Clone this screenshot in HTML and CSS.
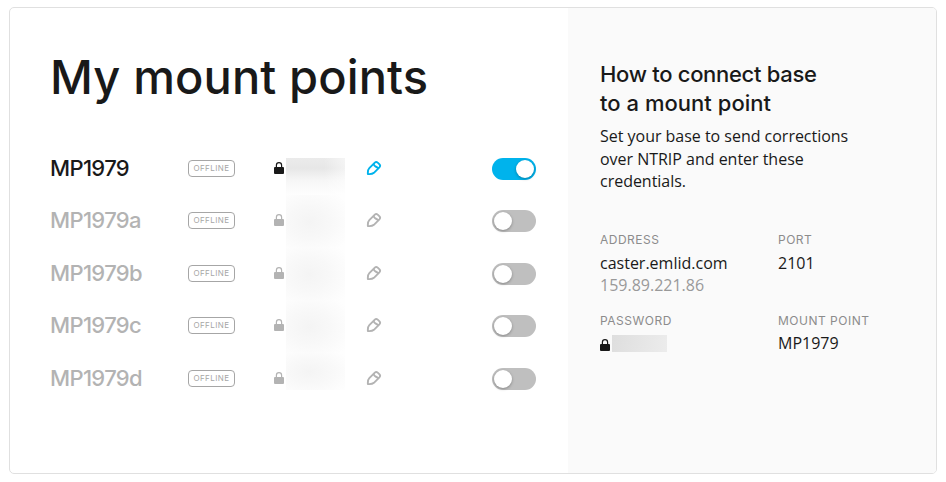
FILE: index.html
```
<!DOCTYPE html>
<html lang="en">
<head>
<meta charset="utf-8">
<title>My mount points</title>
<link rel="stylesheet" href="styles.css">
</head>
<body>
<svg width="0" height="0" class="defs" aria-hidden="true">
  <symbol id="lock" viewBox="0 0 10 12"><path d="M2.4 5.5V3.3a2.6 2.6 0 0 1 5.2 0v2.2" fill="none" stroke="currentColor" stroke-width="1.2"/><rect y="5" width="10" height="7" rx="1" fill="currentColor"/></symbol>
  <symbol id="pencil" viewBox="0 0 16 16"><path d="M1.9 14.1C1.7 11.6 2 9.4 3.3 8.1L8.8 2.6Q10.2 1.3 11.7 2.6L13.5 4.4Q14.8 5.9 13.4 7.3L7.9 12.8C6.6 14 4.3 14.3 1.9 14.1ZM7.7 3.9Q8.1 6 9.5 6.5T12.1 8.3" fill="none" stroke="currentColor" stroke-width="1.9" stroke-linejoin="round"/></symbol>
</svg>
<main class="card">
  <section class="points">
    <h1>My mount points</h1>
    <div class="list">
      <div class="row active"><span class="name">MP1979</span><span class="badge">OFFLINE</span><svg class="lock"><use href="#lock"/></svg><span class="secret"></span><svg class="pencil"><use href="#pencil"/></svg><span class="toggle"></span></div>
      <div class="row"><span class="name">MP1979a</span><span class="badge">OFFLINE</span><svg class="lock"><use href="#lock"/></svg><span class="secret"></span><svg class="pencil"><use href="#pencil"/></svg><span class="toggle"></span></div>
      <div class="row"><span class="name">MP1979b</span><span class="badge">OFFLINE</span><svg class="lock"><use href="#lock"/></svg><span class="secret"></span><svg class="pencil"><use href="#pencil"/></svg><span class="toggle"></span></div>
      <div class="row"><span class="name">MP1979c</span><span class="badge">OFFLINE</span><svg class="lock"><use href="#lock"/></svg><span class="secret"></span><svg class="pencil"><use href="#pencil"/></svg><span class="toggle"></span></div>
      <div class="row"><span class="name">MP1979d</span><span class="badge">OFFLINE</span><svg class="lock"><use href="#lock"/></svg><span class="secret"></span><svg class="pencil"><use href="#pencil"/></svg><span class="toggle"></span></div>
    </div>
  </section>
  <aside class="help">
    <h2>How to connect base<br><span class="second">to a mount point</span></h2>
    <p class="intro">Set your base to send corrections<br>over NTRIP and enter these<br>credentials.</p>
    <dl class="credentials">
      <div><dt>ADDRESS</dt><dd>caster.emlid.com<span class="ip">159.89.221.86</span></dd></div>
      <div><dt>PORT</dt><dd>2101</dd></div>
      <div class="lower"><dt>PASSWORD</dt><dd class="password"><svg class="lock"><use href="#lock"/></svg><span class="mask"></span></dd></div>
      <div class="lower"><dt>MOUNT POINT</dt><dd>MP1979</dd></div>
    </dl>
  </aside>
</main>
</body>
</html>
```

FILE: styles.css
```
* { box-sizing: border-box; }
body { margin: 0; background: #fff; color: #191919; font-family: "Open Sans", sans-serif; }
.defs { position: absolute; }
.card { display: grid; grid-template-columns: 558px 1fr; width: 928px; height: 467px; margin: 7px 0 0 9px; border: 1px solid #e0e0e0; border-radius: 5px; overflow: hidden; }
h1, h2, p, dl, dd { margin: 0; }
h1, h2, .name, .badge, dt { font-family: Inter, sans-serif; }
.points { padding: 40px 32px 0 40px; }
h1 { font-size: 47px; line-height: 58px; font-weight: 550; letter-spacing: 0.12px; white-space: nowrap; }
.list { margin-top: 36px; }
.row { display: grid; grid-template-columns: 138px 86px 12px 80px 126px 44px; align-items: center; height: 52.5px; color: #b3b3b3; }
.name { margin-bottom: 1px; font-size: 22px; line-height: 28px; font-weight: 550; letter-spacing: -0.65px; }
.active { color: #191919; }
.badge { width: 47px; height: 17px; border: 1px solid #a6a6a6; border-radius: 4px; color: #a6a6a6; font-size: 8px; line-height: 15px; text-align: center; letter-spacing: 0.45px; }
.lock { display: block; width: 10px; height: 12px; }
.row .lock, .pencil { margin-bottom: 0.6px; }
.secret { width: 59px; height: 52.5px; background: radial-gradient(ellipse 75% 70% at 40% 52%, #f4f4f4, #f8f8f8 45%, #fefefe); }
.active .secret { height: 37px; align-self: end; background: linear-gradient(to right, transparent 65%, rgba(255,255,255,.5)), linear-gradient(#ebebeb, #e7e7e7 28%, #f6f6f6 60%, #fefefe); }
.row:last-child .secret { height: 38px; align-self: start; }
.pencil { display: block; width: 16px; height: 16px; }
.active .pencil { color: #00b3ec; }
.toggle { width: 44px; height: 22px; margin-top: 1px; padding: 2px; border-radius: 11px; background: #bfbfbf; display: flex; }
.toggle::before { content: ""; width: 18px; height: 18px; border-radius: 50%; background: #fff; box-shadow: 0 1px 3px rgba(0,0,0,.3); }
.active .toggle { justify-content: flex-end; background: #00b3ec; }
.help { background: #fafafa; padding: 52px 32px 0; }
h2 { font-size: 22px; line-height: 29px; font-weight: 500; letter-spacing: -0.3px; white-space: nowrap; }
.second { letter-spacing: 0.03px; }
.intro { margin-top: 7px; font-size: 16px; line-height: 22.5px; letter-spacing: -0.02px; }
.credentials { display: grid; grid-template-columns: 178px 1fr; grid-template-rows: 81px auto; margin-top: 39px; }
dt { font-size: 12px; line-height: 16px; color: #8c8c8c; letter-spacing: 0.5px; }
dd { margin-top: 4px; font-size: 16px; line-height: 22px; }
.ip { display: block; color: #999; }
.lower dd { margin-top: 3px; }
.password { display: flex; align-items: center; gap: 2px; height: 22px; }
.password .lock { margin-top: 4px; }
.mask { width: 55px; height: 17px; margin-top: 1px; background: linear-gradient(100deg, #dedede, #ececec); }
```
